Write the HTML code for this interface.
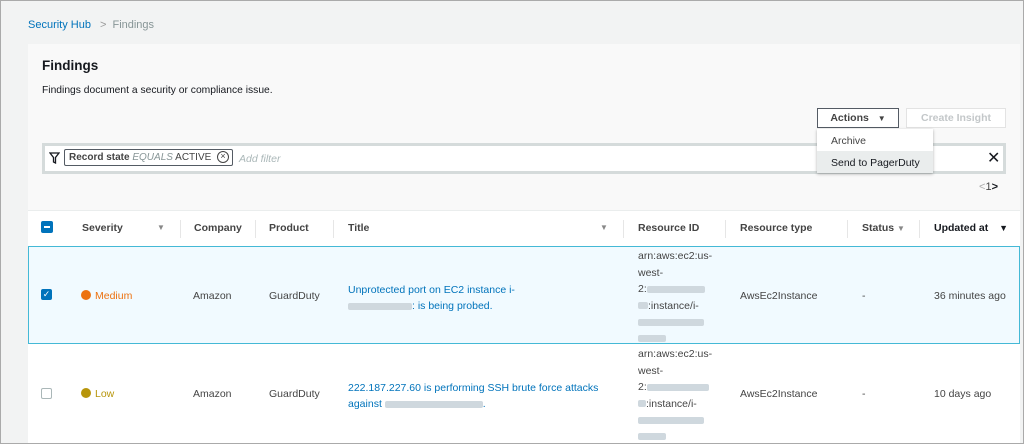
<!DOCTYPE html>
<html><head><style>
*{margin:0;padding:0;box-sizing:border-box}
html,body{width:1024px;height:444px;overflow:hidden}
body{background:#f2f3f3;font-family:"Liberation Sans",sans-serif;font-size:10.5px;color:#444;position:relative}
.a{position:absolute;white-space:nowrap}
.b{font-weight:bold;color:#444}
.blur{display:inline-block;height:7px;background:#cfd8de;vertical-align:middle;border-radius:2px}
.sep{position:absolute;top:220px;width:1px;height:18px;background:#e6e6e6}
.tri{font-size:8px;color:#888}
.rid div{height:16.5px;line-height:16.5px}
</style></head><body>
<div style="position:absolute;left:0;top:0;width:1024px;height:444px;border:1px solid #aaa;z-index:9;pointer-events:none"></div>
<div class="a" style="left:28px;top:19px;color:#0073bb;font-size:11px">Security Hub <span style="color:#999;margin:0 6px">&gt;</span><span style="color:#879596">Findings</span></div>
<div class="a" style="left:28px;top:44px;width:992px;height:166px;background:#f9f9f9"></div>
<div class="a b" style="left:42px;top:58px;font-size:13.5px;color:#16191f">Findings</div>
<div class="a" style="left:42px;top:85px;font-size:10.3px;color:#16191f">Findings document a security or compliance issue.</div>
<div class="a" style="left:817px;top:108px;width:82px;height:20px;border:1px solid #545b64;background:#fff;text-align:center;line-height:18px;font-weight:bold;color:#444">Actions <span style="font-size:8px;margin-left:6px">▼</span></div>
<div class="a" style="left:906px;top:108px;width:100px;height:20px;border:1px solid #e3e3e3;background:#fff;text-align:center;line-height:18px;font-weight:bold;color:#c3c7c9">Create Insight</div>
<div class="a" style="left:42px;top:143px;width:964px;height:31px;background:#d5dbdb"></div>
<div class="a" style="left:45px;top:146px;width:958px;height:25px;background:#fff"></div>
<svg class="a" style="left:49px;top:152px" width="11" height="12" viewBox="0 0 11 12"><path d="M1 1h9L6.5 5.5V11L4.5 10V5.5Z" fill="none" stroke="#16191f" stroke-width="1.3"/></svg>
<div class="a" style="left:64px;top:149px;width:169px;height:17px;border:1px solid #545b64;border-radius:2px;background:#fff;line-height:15px;padding-left:4px;color:#444;font-size:10px"><b>Record state</b> <i style="color:#879596">EQUALS</i> ACTIVE</div>
<div class="a" style="left:217px;top:151px;width:12px;height:12px;border:1.3px solid #444;border-radius:50%;font-size:9px;line-height:9px;text-align:center;color:#444">×</div>
<div class="a" style="left:239px;top:153px;color:#aab7b8;font-style:italic">Add filter</div>
<div class="a" style="left:987px;top:148px;font-size:16px;color:#16191f">✕</div>
<div class="a" style="left:817px;top:129px;width:116px;height:44px;background:#fff;box-shadow:0 1px 3px rgba(0,0,0,.3)"></div>
<div class="a" style="left:817px;top:151px;width:116px;height:22px;background:#eaeded"></div>
<div class="a" style="left:831px;top:135px;color:#444">Archive</div>
<div class="a" style="left:831px;top:157px;color:#16191f">Send to PagerDuty</div>
<div class="a" style="left:979px;top:181px;font-size:11px;color:#aaa">&lt;<span style="color:#444">1</span><b style="color:#16191f">&gt;</b></div>
<div class="a" style="left:28px;top:210px;width:992px;height:234px;background:#fff;border-top:1px solid #eaeded"></div>
<div class="a" style="left:41px;top:221px;width:12px;height:12px;background:#0073bb;border-radius:2px"><div style="margin:5px 3px;height:2px;background:#fff"></div></div>
<div class="a b" style="left:82px;top:222px">Severity</div><div class="a tri" style="left:157px;top:223px">▼</div>
<div class="sep" style="left:180px"></div>
<div class="a b" style="left:194px;top:222px">Company</div>
<div class="sep" style="left:255px"></div>
<div class="a b" style="left:269px;top:222px">Product</div>
<div class="sep" style="left:333px"></div>
<div class="a b" style="left:348px;top:222px">Title</div><div class="a tri" style="left:600px;top:223px">▼</div>
<div class="sep" style="left:623px"></div>
<div class="a b" style="left:638px;top:222px">Resource ID</div>
<div class="sep" style="left:725px"></div>
<div class="a b" style="left:740px;top:222px">Resource type</div>
<div class="sep" style="left:847px"></div>
<div class="a b" style="left:862px;top:222px">Status <span class="tri">▼</span></div>
<div class="sep" style="left:919px"></div>
<div class="a b" style="left:934px;top:222px;color:#16191f">Updated at <span style="font-size:9px;margin-left:8px">▼</span></div>
<div class="a" style="left:28px;top:246px;width:992px;height:98px;background:#f1faff;border:1px solid #44b9d6"></div>
<div class="a" style="left:41px;top:289px;width:11px;height:11px;background:#0073bb;border-radius:2px;color:#fff;font-size:9px;line-height:11px;text-align:center">✓</div>
<div class="a" style="left:81px;top:290px;width:10px;height:10px;border-radius:50%;background:#ec7211"></div>
<div class="a" style="left:95px;top:290px;color:#ec7211">Medium</div>
<div class="a" style="left:193px;top:290px">Amazon</div>
<div class="a" style="left:269px;top:290px">GuardDuty</div>
<div class="a" style="left:348px;top:282px;color:#0073bb;line-height:16px">Unprotected port on EC2 instance i-<br><span class="blur" style="width:64px"></span>: is being probed.</div>
<div class="a rid" style="left:638px;top:248px"><div>arn:aws:ec2:us-</div><div>west-</div><div>2:<span class="blur" style="width:58px"></span></div><div><span class="blur" style="width:10px"></span>:instance/i-</div><div><span class="blur" style="width:66px"></span></div><div><span class="blur" style="width:28px"></span></div></div>
<div class="a" style="left:740px;top:290px">AwsEc2Instance</div>
<div class="a" style="left:862px;top:290px">-</div>
<div class="a" style="left:934px;top:290px">36 minutes ago</div>
<div class="a" style="left:41px;top:388px;width:11px;height:11px;border:1px solid #aab7b8;border-radius:2px;background:#fff"></div>
<div class="a" style="left:81px;top:388px;width:10px;height:10px;border-radius:50%;background:#b7950b"></div>
<div class="a" style="left:95px;top:388px;color:#b7950b">Low</div>
<div class="a" style="left:193px;top:388px">Amazon</div>
<div class="a" style="left:269px;top:388px">GuardDuty</div>
<div class="a" style="left:348px;top:380px;color:#0073bb;line-height:16px">222.187.227.60 is performing SSH brute force attacks<br>against <span class="blur" style="width:98px"></span>.</div>
<div class="a rid" style="left:638px;top:346px"><div>arn:aws:ec2:us-</div><div>west-</div><div>2:<span class="blur" style="width:62px"></span></div><div><span class="blur" style="width:8px"></span>:instance/i-</div><div><span class="blur" style="width:66px"></span></div><div><span class="blur" style="width:28px"></span></div></div>
<div class="a" style="left:740px;top:388px">AwsEc2Instance</div>
<div class="a" style="left:862px;top:388px">-</div>
<div class="a" style="left:934px;top:388px">10 days ago</div>
</body></html>
